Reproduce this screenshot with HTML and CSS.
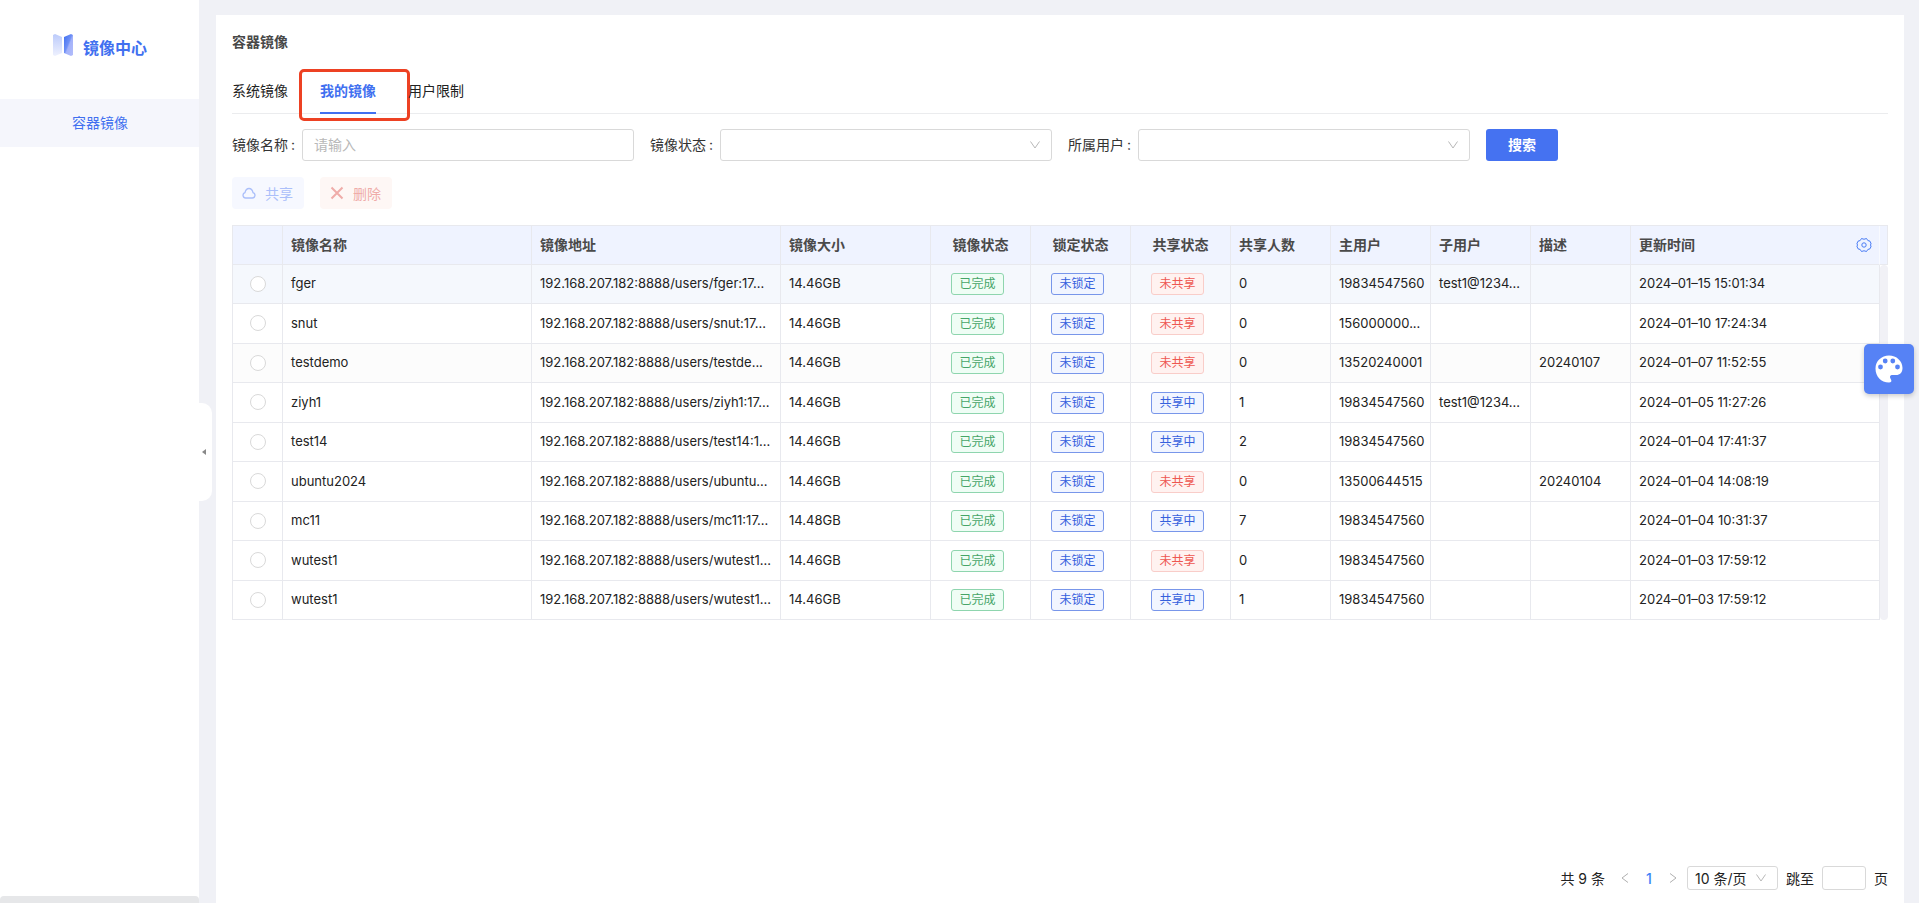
FILE: index.html
```
<!DOCTYPE html>
<html lang="zh-CN">
<head>
<meta charset="utf-8">
<title>镜像中心</title>
<link rel="stylesheet" href="styles.css">
</head>
<body>
<div class="app">
  <aside class="sidebar">
    <div class="brand">
      <svg class="brand-logo" viewBox="0 0 20 22" aria-hidden="true">
        <defs>
          <linearGradient id="lg1" x1="0" y1="0" x2="0" y2="1"><stop offset="0" stop-color="#bccbfb"/><stop offset="1" stop-color="#eef1fe"/></linearGradient>
          <linearGradient id="lg2" x1="0" y1="0" x2="1" y2="1"><stop offset="0" stop-color="#3f6ff0"/><stop offset=".45" stop-color="#6f90f6"/><stop offset=".55" stop-color="#a3b2fa"/><stop offset="1" stop-color="#b3bdfb"/></linearGradient>
        </defs>
        <path fill="url(#lg1)" d="M0 1 2 0 9 3V19L2 22 0 21Z"/>
        <path fill="url(#lg2)" d="M20 1 18 0 11 3V19L18 22 20 21Z"/>
      </svg>
      <span class="brand-name">镜像中心</span>
    </div>
    <nav><a class="menu-item" href="#">容器镜像</a></nav>
    <div class="side-scroll"></div>
    <button class="collapse" type="button" aria-label="收起菜单"><svg viewBox="0 0 4 6" aria-hidden="true"><path fill="#888" d="M4 0V6L0 3Z"/></svg></button>
  </aside>
  <main class="panel">
    <h1 class="title">容器镜像</h1>
    <nav class="tabs">
      <a class="tab" href="#">系统镜像</a>
      <a class="tab active" href="#">我的镜像<span class="marker"></span></a>
      <a class="tab" href="#">用户限制</a>
    </nav>
    <form class="filters">
      <div class="field"><label for="f-name">镜像名称<span class="colon">:</span></label><input id="f-name" class="control" type="text" placeholder="请输入"></div>
      <div class="field"><label for="f-state">镜像状态<span class="colon">:</span></label><div class="select-wrap"><select id="f-state" class="control"><option></option></select><svg class="chevron" viewBox="0 0 12 12" aria-hidden="true"><path d="M1.500 2.500 6 9 10.500 2.500"/></svg></div></div>
      <div class="field"><label for="f-user">所属用户<span class="colon">:</span></label><div class="select-wrap"><select id="f-user" class="control"><option></option></select><svg class="chevron" viewBox="0 0 12 12" aria-hidden="true"><path d="M1.500 2.500 6 9 10.500 2.500"/></svg></div></div>
      <button class="search" type="button">搜索</button>
    </form>
    <div class="actions">
      <button class="action share" type="button" disabled><svg viewBox="0 0 14 14" aria-hidden="true"><path d="M3.800 12A2.700 2.700 0 0 1 3 6.700C3.500 4 5 2.500 7 2.500S10.500 4 11 6.700A2.700 2.700 0 0 1 10.200 12Z"/></svg>共享</button>
      <button class="action remove" type="button" disabled><svg viewBox="0 0 14 14" aria-hidden="true"><path d="M1.500 1.500 12.500 12.500M12.500 1.500 1.500 12.500"/></svg>删除</button>
    </div>
    <div class="table-area">
      <table class="grid">
        <colgroup><col class="c-pick"><col class="c-wide"><col class="c-wide"><col class="c-size"><col class="c-std"><col class="c-std"><col class="c-std"><col class="c-std"><col class="c-std"><col class="c-std"><col class="c-std"><col><col class="c-bar"></colgroup>
        <thead><tr><th></th><th>镜像名称</th><th>镜像地址</th><th>镜像大小</th><th class="mid">镜像状态</th><th class="mid">锁定状态</th><th class="mid">共享状态</th><th>共享人数</th><th>主用户</th><th>子用户</th><th>描述</th><th class="last"><div class="th-flex">更新时间<button class="gear" type="button" aria-label="列设置"><svg viewBox="0 0 16 16" aria-hidden="true"><path d="M5.500 1.500Q8 3 10.500 1.500L11.800 3.500 14 4.200 15.200 7Q13.200 8 15.200 9L14 11.800 11.800 12.500 10.500 14.500Q8 13 5.500 14.500L4.200 12.500 2 11.800.800 9Q2.800 8 .800 7L2 4.200 4.200 3.500Z"/><circle cx="8" cy="8" r="2.200"/></svg></button></div></th><th class="bar-head"></th></tr></thead>
        <tbody>
          <tr class="hover"><td class="pick"><input type="radio" name="row" aria-label="fger"></td><td>fger</td><td>192.168.207.182:8888/users/fger:17...</td><td>14.46GB</td><td class="mid"><span class="tag green">已完成</span></td><td class="mid"><span class="tag blue">未锁定</span></td><td class="mid"><span class="tag red">未共享</span></td><td>0</td><td>19834547560</td><td>test1@1234...</td><td></td><td>2024–01–15 15:01:34</td><td class="bar" rowspan="9"></td></tr>
          <tr><td class="pick"><input type="radio" name="row" aria-label="snut"></td><td>snut</td><td>192.168.207.182:8888/users/snut:17...</td><td>14.46GB</td><td class="mid"><span class="tag green">已完成</span></td><td class="mid"><span class="tag blue">未锁定</span></td><td class="mid"><span class="tag red">未共享</span></td><td>0</td><td>156000000...</td><td></td><td></td><td>2024–01–10 17:24:34</td></tr>
          <tr class="shade"><td class="pick"><input type="radio" name="row" aria-label="testdemo"></td><td>testdemo</td><td>192.168.207.182:8888/users/testde...</td><td>14.46GB</td><td class="mid"><span class="tag green">已完成</span></td><td class="mid"><span class="tag blue">未锁定</span></td><td class="mid"><span class="tag red">未共享</span></td><td>0</td><td>13520240001</td><td></td><td>20240107</td><td>2024–01–07 11:52:55</td></tr>
          <tr><td class="pick"><input type="radio" name="row" aria-label="ziyh1"></td><td>ziyh1</td><td>192.168.207.182:8888/users/ziyh1:17...</td><td>14.46GB</td><td class="mid"><span class="tag green">已完成</span></td><td class="mid"><span class="tag blue">未锁定</span></td><td class="mid"><span class="tag blue">共享中</span></td><td>1</td><td>19834547560</td><td>test1@1234...</td><td></td><td>2024–01–05 11:27:26</td></tr>
          <tr><td class="pick"><input type="radio" name="row" aria-label="test14"></td><td>test14</td><td>192.168.207.182:8888/users/test14:1...</td><td>14.46GB</td><td class="mid"><span class="tag green">已完成</span></td><td class="mid"><span class="tag blue">未锁定</span></td><td class="mid"><span class="tag blue">共享中</span></td><td>2</td><td>19834547560</td><td></td><td></td><td>2024–01–04 17:41:37</td></tr>
          <tr><td class="pick"><input type="radio" name="row" aria-label="ubuntu2024"></td><td>ubuntu2024</td><td>192.168.207.182:8888/users/ubuntu...</td><td>14.46GB</td><td class="mid"><span class="tag green">已完成</span></td><td class="mid"><span class="tag blue">未锁定</span></td><td class="mid"><span class="tag red">未共享</span></td><td>0</td><td>13500644515</td><td></td><td>20240104</td><td>2024–01–04 14:08:19</td></tr>
          <tr><td class="pick"><input type="radio" name="row" aria-label="mc11"></td><td>mc11</td><td>192.168.207.182:8888/users/mc11:17...</td><td>14.48GB</td><td class="mid"><span class="tag green">已完成</span></td><td class="mid"><span class="tag blue">未锁定</span></td><td class="mid"><span class="tag blue">共享中</span></td><td>7</td><td>19834547560</td><td></td><td></td><td>2024–01–04 10:31:37</td></tr>
          <tr><td class="pick"><input type="radio" name="row" aria-label="wutest1"></td><td>wutest1</td><td>192.168.207.182:8888/users/wutest1...</td><td>14.46GB</td><td class="mid"><span class="tag green">已完成</span></td><td class="mid"><span class="tag blue">未锁定</span></td><td class="mid"><span class="tag red">未共享</span></td><td>0</td><td>19834547560</td><td></td><td></td><td>2024–01–03 17:59:12</td></tr>
          <tr><td class="pick"><input type="radio" name="row" aria-label="wutest1"></td><td>wutest1</td><td>192.168.207.182:8888/users/wutest1...</td><td>14.46GB</td><td class="mid"><span class="tag green">已完成</span></td><td class="mid"><span class="tag blue">未锁定</span></td><td class="mid"><span class="tag blue">共享中</span></td><td>1</td><td>19834547560</td><td></td><td></td><td>2024–01–03 17:59:12</td></tr>
        </tbody>
      </table>
    </div>
    <footer class="pager">
      <span class="total">共 9 条</span>
      <button class="step" type="button" aria-label="上一页"><svg viewBox="0 0 12 12" aria-hidden="true"><path d="M9 1.500 3 6 9 10.500"/></svg></button>
      <button class="page" type="button">1</button>
      <button class="step" type="button" aria-label="下一页"><svg viewBox="0 0 12 12" aria-hidden="true"><path d="M3 1.500 9 6 3 10.500"/></svg></button>
      <div class="select-wrap size-wrap"><select class="size" aria-label="每页条数"><option>10 条/页</option></select><svg class="chevron" viewBox="0 0 12 12" aria-hidden="true"><path d="M1.500 2.500 6 9 10.500 2.500"/></svg></div>
      <label for="jump">跳至</label>
      <input id="jump" class="jump" type="text">
      <span>页</span>
    </footer>
  </main>
  <button class="theme" type="button" aria-label="主题"><svg viewBox="0 0 28 28" aria-hidden="true"><path fill="#fff" d="M14 .5C6.500.500.500 6 .500 13.500.500 21.500 6 27.500 14 27.500 16 27.500 17 26.500 16 24.500 14.500 22 14.500 20 18 20H21C25 20 27.500 17.500 27.500 13 27.500 6 21.500.500 14 .5Z"/><g fill="#5682f5"><circle cx="5.500" cy="12" r="2.400"/><circle cx="10.200" cy="6" r="2.400"/><circle cx="17.800" cy="6" r="2.400"/><circle cx="22.500" cy="12" r="2.400"/></g></svg></button>
</div>
</body>
</html>
```
FILE: styles.css
```
* { box-sizing: border-box; }
body {
  margin: 0;
  background: #f0f1f6;
  color: #222;
  font-family: Inter, "Noto Sans CJK SC", sans-serif;
  font-size: 14px;
}
a { color: inherit; text-decoration: none; }
button, input, select { font: inherit; color: inherit; margin: 0; }
button { padding: 0; border: 0; background: none; }
svg { display: block; fill: none; stroke: none; }

.app { display: flex; height: 100vh; overflow: hidden; }
.sidebar {
  position: relative;
  display: flex;
  flex-direction: column;
  flex: 0 0 199px;
  background: #fff;
}
.brand {
  display: flex;
  justify-content: center;
  gap: 10px;
  height: 99px;
  padding: 34px 0 0 1px;
}
.brand-logo { width: 20px; height: 22px; }
.brand-name {
  font-size: 16px;
  font-weight: 700;
  line-height: 28px;
  color: #4170f0;
}
.menu-item {
  display: block;
  padding-left: 1px;
  background: #f5f6fc;
  color: #4170f0;
  line-height: 48px;
  text-align: center;
}
.side-scroll { height: 7px; margin-top: auto; border-radius: 4px 4px 0 0; background: #e6e7e9; }
.collapse {
  position: absolute;
  left: 100%;
  top: 403px;
  width: 13px;
  height: 98px;
  padding-left: 3px;
  border-radius: 0 10px 10px 0;
  background: #fff;
}
.collapse svg { width: 4px; height: 6px; }

.panel {
  display: flex;
  flex-direction: column;
  flex: 1;
  min-width: 0;
  margin: 15px 15px 0 17px;
  padding: 16px 16px 12px;
  background: #fff;
}
.title { margin: 0; font-size: 14px; font-weight: 700; line-height: 22px; color: #484848; }
.tabs { display: flex; gap: 32px; margin-top: 16px; border-bottom: 1px solid #ebecee; }
.tab { position: relative; height: 44px; line-height: 44px; }
.tab.active {
  margin-bottom: -1px;
  height: 45px;
  border-bottom: 2px solid #4170f0;
  color: #4170f0;
  font-weight: 700;
}
.marker {
  position: absolute;
  inset: 0 -34px -9px -21px;
  border: 3px solid #ed4123;
  border-radius: 5px;
}
.filters { display: flex; gap: 16px; margin-top: 15px; }
.field { display: flex; align-items: center; flex: 0 0 402px; color: #333; }
.field label { flex: 0 0 70px; padding-bottom: 2px; white-space: nowrap; }
.colon { margin-left: 3px; }
.control {
  width: 332px;
  height: 32px;
  padding: 0 11px 2px;
  border: 1px solid #d9d9d9;
  border-radius: 3px;
  background: #fff;
  outline: 0;
  appearance: none;
}
.control::placeholder { color: #b8b8b8; }
.select-wrap { position: relative; }
.chevron {
  position: absolute;
  right: 11px;
  top: 50%;
  width: 12px;
  height: 12px;
  margin-top: -6px;
  stroke: #b8b8b8;
  pointer-events: none;
}
.search { width: 72px; height: 32px; padding-bottom: 2px; border-radius: 3px; background: #4572f1; color: #fff; font-weight: 700; }
.actions { display: flex; gap: 16px; margin-top: 16px; }
.action {
  display: flex;
  align-items: center;
  gap: 9px;
  width: 72px;
  height: 32px;
  padding-left: 10px;
  border-radius: 4px;
}
.action svg { width: 14px; height: 14px; stroke: currentColor; stroke-width: 1.300; }
.share { background: #f6f8ff; color: #abbffa; }
.remove { background: #fef7f5; color: #efaca9; }
.remove svg { stroke-width: 2; }

.table-area { margin-top: 16px; }
.grid {
  width: 100%;
  table-layout: fixed;
  border-spacing: 0;
  border-top: 1px solid #e8e9ee;
  border-left: 1px solid #e8e9ee;
  font-size: 13px;
  line-height: 20px;
}
.c-pick { width: 50px; }
.c-wide { width: 249px; }
.c-size { width: 150px; }
.c-std { width: 100px; }
.c-bar { width: 8px; }
.grid th, .grid td {
  height: 39px;
  padding: 0 8px;
  border-right: 1px solid #e8e9ee;
  border-bottom: 1px solid #e8e9ee;
  text-align: left;
  white-space: nowrap;
}
.grid td { padding-bottom: 2px; }
.grid tbody tr:nth-child(even) td:not(.bar) { height: 40px; }
.grid th { background: #eff3ff; font-size: 14px; font-weight: 700; color: #4a4a4a; }
.grid .mid { text-align: center; }
.grid td.mid { padding: 0 14px 0 8px; }
.grid .last { border-right-color: #f8faff; }
.grid .bar-head { padding: 0; }
.grid .bar { padding: 0; border: 0; background: #f1f1f6; border-radius: 4px; }
.hover td { background: #f5f8fd; }
.shade td { background: #fcfcfc; }
.grid .pick { padding: 0 0 1px; text-align: center; }
.pick input {
  display: block;
  width: 16px;
  height: 16px;
  margin: 0 auto;
  border: 1px solid #d9d9d9;
  border-radius: 50%;
  background: #fff;
  appearance: none;
}
.tag {
  display: inline-block;
  padding: 0 7px;
  border: 1px solid;
  border-radius: 3px;
  font-size: 12px;
  line-height: 20px;
  vertical-align: middle;
}
.green { background: #effdf5; border-color: #8ed5ae; color: #46a568; }
.blue { background: #f1f5ff; border-color: #7896ea; color: #3560dd; }
.red { background: #fff2f0; border-color: #f9cdc9; color: #ee5750; }
.th-flex { display: flex; align-items: center; justify-content: space-between; }
.gear { margin-right: -1px; }
.gear svg { width: 16px; height: 16px; stroke: #4b7df5; }

.pager { display: flex; align-items: center; justify-content: flex-end; margin-top: auto; height: 26px; }
.step svg { width: 12px; height: 12px; stroke: #b0b0b0; }
.total { margin-right: 14px; }
.page { width: 36px; color: #3d83f7; font-weight: 500; }
.size-wrap { margin: 0 8px; }
.size {
  display: block;
  width: 91px;
  height: 24px;
  padding: 0 7px;
  border: 1px solid #d9d9d9;
  border-radius: 3px;
  background: #fff;
  appearance: none;
}
.jump { width: 44px; height: 24px; margin: 0 8px; border: 1px solid #d9d9d9; border-radius: 3px; }

.theme {
  position: absolute;
  right: 5px;
  top: 344px;
  display: flex;
  align-items: center;
  justify-content: center;
  width: 50px;
  height: 50px;
  border-radius: 5px;
  background: #5682f5;
  box-shadow: 0 2px 5px rgba(0, 0, 0, .2);
}
.theme svg { width: 28px; height: 28px; }
```
